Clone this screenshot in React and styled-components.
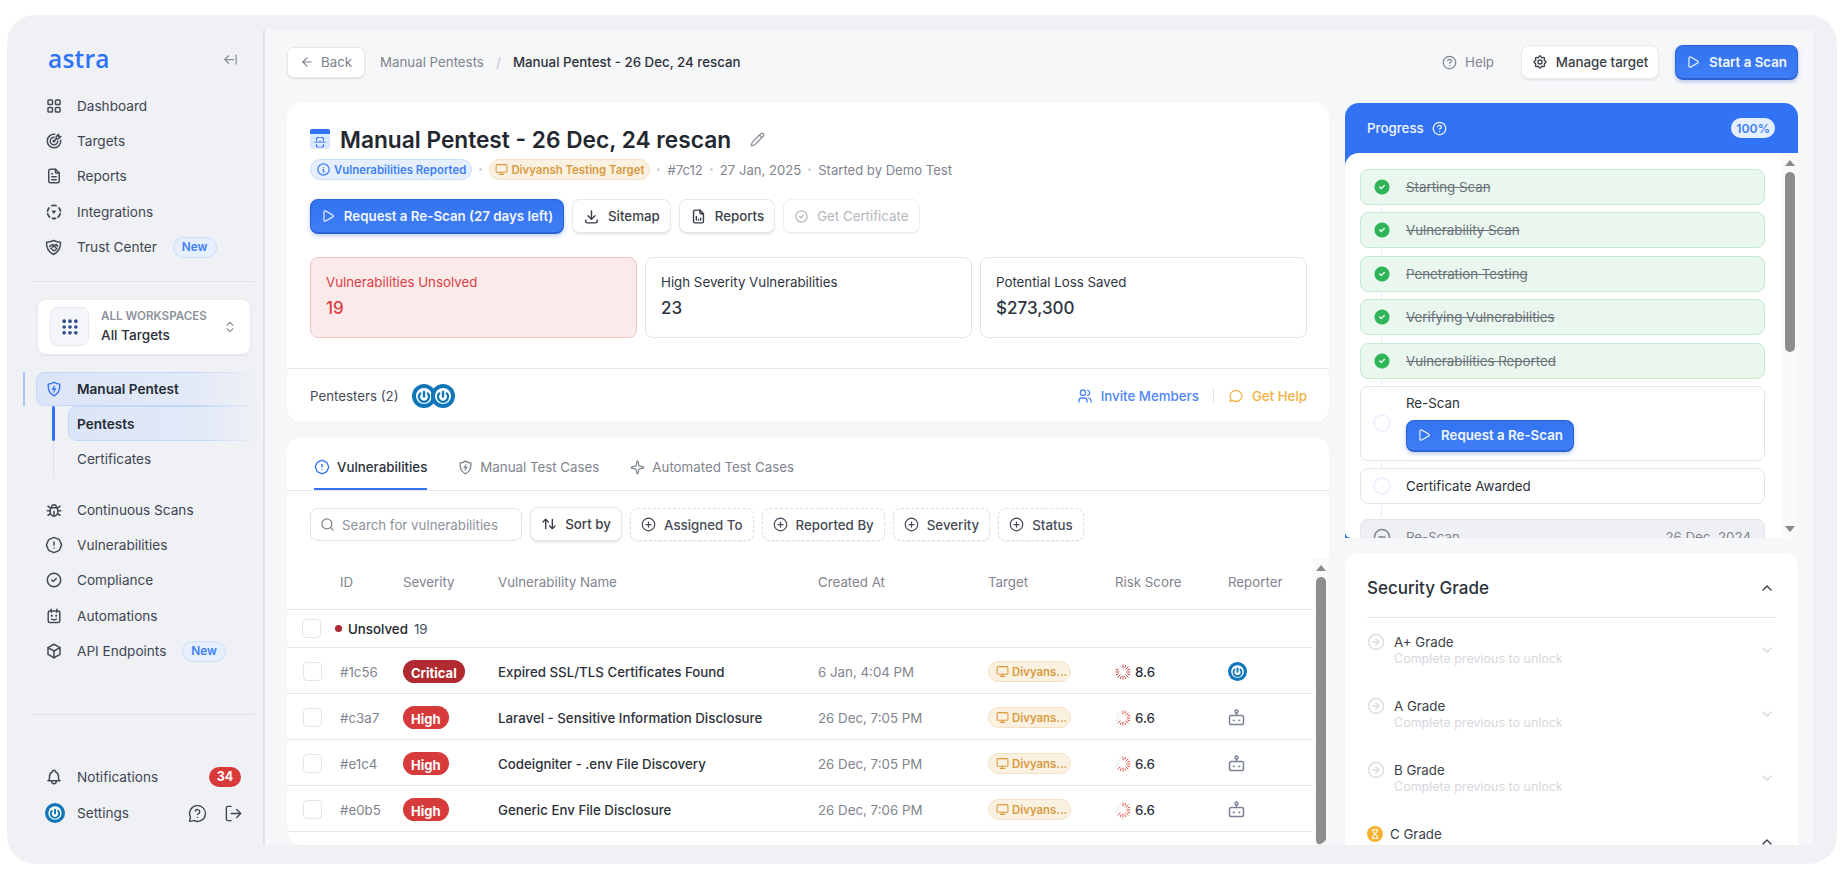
import React from 'react';
import styled, { createGlobalStyle } from 'styled-components';
import {
  ArrowLeft, ArrowLeftFromLine, ChevronDown, ChevronUp, ChevronsUpDown, CircleArrowRight, CircleHelp,
  CircleMinus, CirclePlus, Grip, Hourglass, LogOut, MessageCircleQuestion, Monitor, Pencil, Play, Search, Sparkle,
} from 'lucide-react';
import {
  TbAlertOctagon, TbArrowsSort, TbBell, TbBox, TbBug, TbCircleCheck, TbCircleCheckFilled, TbDownload,
  TbFileAnalytics, TbFileText, TbInfoCircle, TbLayoutGrid, TbMessageCircle,
  TbSettings, TbTargetArrow, TbUsers,
} from 'react-icons/tb';

const GlobalStyle = createGlobalStyle`
  html, body {
    margin: 0;
    height: 100%;
    background: #fff;
    overflow: hidden;
  }
  body {
    font-family: Inter, "Liberation Sans", sans-serif;
    color: #23272f;
  }
  * { box-sizing: border-box; }
  svg { flex: none; }
`;

// small drawings with no matching package icon
const IntegrationsIcon = () => (
  <svg width="16" height="16" viewBox="0 0 16 16" fill="none" stroke="currentColor" strokeWidth="1.8" strokeLinecap="round">
    <path d="M6 1.7a6.5 6.5 0 0 1 4 0M13 4a6.5 6.5 0 0 1 1.4 3M14.2 9.6a6.5 6.5 0 0 1-2 3.4M9.6 14.3a6.5 6.5 0 0 1-3.2 0M3.6 13a6.5 6.5 0 0 1-2-3.4M1.6 7A6.5 6.5 0 0 1 3 4" />
    <path d="M6.4 7h3.2L8 9.2z" fill="currentColor" strokeWidth="1" />
  </svg>
);

const TrustIcon = () => (
  <svg width="17" height="17" viewBox="0 0 17 17" fill="none" stroke="currentColor" strokeWidth="1.5" strokeLinejoin="round" strokeLinecap="round">
    <path d="M1.5 3.2c2.4 0 4.6-.5 7-1.7 2.4 1.2 4.6 1.7 7 1.7 .3 5.6-2.2 9.8-7 12.3-4.8-2.5-7.3-6.7-7-12.3z" />
    <path d="M4.6 7.4l2.6-1.9 2 1 2.2-1 1.2 1.9M7.2 8.2l1.7-1.3 3 2.8-2.7 2.3-3.4-2.7" />
  </svg>
);

const CalendarBot = () => (
  <svg width="16" height="16" viewBox="0 0 16 16" fill="none" stroke="currentColor" strokeWidth="1.5" strokeLinecap="round">
    <rect x="2.2" y="3" width="11.6" height="11.5" rx="1.6" />
    <path d="M5.2 1.2v3M10.8 1.2v3M5.5 11c1.5 1 3.5 1 5 0" />
    <path d="M5.8 7.5v.4M10.2 7.5v.4" strokeWidth="1.9" />
  </svg>
);

const ShieldBolt = ({ size = 16 }) => (
  <svg width={size} height={size} viewBox="0 0 16 16" fill="none" stroke="currentColor" strokeWidth="1.4" strokeLinejoin="round">
    <path d="M8 1.2c1.8 1.3 3.7 1.9 5.8 1.9.4 5.3-1.5 9.500-5.8 11.700C3.700 12.600 1.800 8.400 2.200 3.100 4.300 3.100 6.200 2.500 8 1.200z" />
    <path d="M8.600 4.600L6 8.500h2.200l-.7 3 2.500-3.900H7.900z" fill="currentColor" strokeWidth="0.6" />
  </svg>
);

const RobotIcon = () => (
  <svg width="17" height="17" viewBox="0 0 17 17" fill="none" stroke="#7b8494" strokeWidth="1.5" strokeLinecap="round">
    <circle cx="8.5" cy="2.6" r="1.5" />
    <path d="M8.5 4.2v2.3" />
    <rect x="1.5" y="6.5" width="14" height="9" rx="1.8" />
    <path d="M5.500 11.300h.5M11 11.300h.5" strokeWidth="1.7" />
  </svg>
);

const TitleIcon = () => (
  <svg width="20" height="20" viewBox="0 0 20 20" fill="none">
    <path d="M0 5h20v13a2 2 0 0 1-2 2H2a2 2 0 0 1-2-2z" fill="#dbe7fd" />
    <path d="M2 0h16a2 2 0 0 1 2 2v3H0V2a2 2 0 0 1 2-2z" fill="#3273f6" />
    <path d="M9 8.500H8a1.500 1.500 0 0 0-1.500 1.500v1M11 8.500h1a1.500 1.500 0 0 1 1.500 1.500v1M9 18h-1a1.500 1.500 0 0 1-1.500-1.500V15.500M11 18h1a1.500 1.500 0 0 0 1.500-1.500V15.500M5 13h10" stroke="#3273f6" strokeWidth="1.2" strokeLinecap="round" />
  </svg>
);

const Avatar = ({ size = 20 }) => (
  <svg width={size} height={size} viewBox="0 0 24 24">
    <circle cx="12" cy="12" r="12" fill="#0f76b8" />
    <circle cx="12" cy="12" r="8" fill="#fff" />
    <path d="M8.2 9.500a5 5 0 1 0 7.600 0" fill="none" stroke="#0f76b8" strokeWidth="2.4" strokeLinecap="round" />
    <path d="M12 8v4.500" stroke="#0f76b8" strokeWidth="2.4" strokeLinecap="round" />
  </svg>
);

const RiskSpinner = ({ score, color }) => {
  const lit = Math.round((score / 10) * 16);
  return (
    <svg width="16" height="16" viewBox="0 0 16 16">
      {Array.from({ length: 16 }, (_, i) => (
        <line
          key={i}
          x1="8"
          y1="0.8"
          x2="8"
          y2={i % 2 ? 3 : 4}
          stroke={i < lit ? color : '#e3e5e9'}
          strokeWidth="0.9"
          strokeLinecap="round"
          transform={`rotate(${(i * 360) / 16} 8 8)`}
        />
      ))}
    </svg>
  );
};

const Frame = styled.div`
  position: relative;
  display: flex;
  width: 1830px;
  height: 849px;
  margin: 15px 0 0 7px;
  background: #eff1f5;
  border-radius: 28px;
  overflow: hidden;
`;

const Sidebar = styled.aside`
  position: relative;
  flex: none;
  width: 258px;
  border-right: 2px solid #dfe1e7;
  margin: 15px 0 19px;
  display: flex;
  flex-direction: column;
`;

const LogoRow = styled.div`
  height: 58px;
  flex: none;
  display: flex;
  align-items: center;
  justify-content: space-between;
  padding: 0 25px 0 41px;
  color: #8a8f99;
`;

const Logo = styled.span`
  font-family: "Open Sans", sans-serif;
  font-size: 24.5px;
  font-weight: 600;
  color: #2f73f5;
  line-height: 1;
  letter-spacing: 0.2px;
`;

const NavList = styled.nav`
  display: flex;
  flex-direction: column;
`;

const NavItem = styled.div`
  height: 35.4px;
  flex: none;
  display: flex;
  align-items: center;
  padding-left: 38px;
  font-size: 13.6px;
  color: #3f4552;
  svg { color: #454b57; }
`;

const NavIcon = styled.span`
  width: 17px;
  margin-right: 15px;
  display: flex;
  justify-content: center;
`;

const NewBadge = styled.span`
  margin-left: 16px;
  height: 21px;
  padding: 0 8px;
  display: flex;
  align-items: center;
  border-radius: 11px;
  background: #e6effd;
  border: 1px solid #c9dcfb;
  color: #3f80f5;
  font-size: 11.8px;
  font-weight: 600;
`;

const SideDivider = styled.div`
  height: 1px;
  flex: none;
  margin: ${(p) => p.$top}px 8px 0 24px;
  background: #dfe1e7;
`;

const Workspace = styled.div`
  margin: 18px 13px 0 31px;
  height: 54px;
  flex: none;
  display: flex;
  align-items: center;
  padding: 0 13px 0 12px;
  background: #fff;
  border-radius: 8px;
  box-shadow: 0 1px 3px rgba(30, 40, 60, 0.1);
`;

const WorkspaceIcon = styled.div`
  width: 39px;
  height: 39px;
  display: flex;
  align-items: center;
  justify-content: center;
  background: #f5f6f9;
  border: 1px solid #e6e8ed;
  border-radius: 8px;
  color: #2c4a8a;
  margin-right: 12px;
`;

const WorkspaceText = styled.div`
  flex: 1;
  display: flex;
  flex-direction: column;
  gap: 4px;
`;

const WorkspaceLabel = styled.span`
  font-size: 11.6px;
  line-height: 14px;
  font-weight: 600;
  color: #8d929c;
`;

const WorkspaceName = styled.span`
  font-size: 13.6px;
  line-height: 17px;
  font-weight: 500;
  color: #2c313a;
`;

const fadedFill = `
  &::after {
    content: '';
    position: absolute;
    inset: 0;
    z-index: -1;
    border: 1px solid #c6d8f9;
    border-radius: 8px 0 0 8px;
    background: linear-gradient(90deg, #dbe5f8, #e6ebf7);
    -webkit-mask-image: linear-gradient(90deg, #000 72%, transparent);
    mask-image: linear-gradient(90deg, #000 72%, transparent);
  }
`;

const ActiveGroup = styled.div`
  position: relative;
  isolation: isolate;
  margin: 18px 3px 0 29px;
  height: 34px;
  flex: none;
  display: flex;
  align-items: center;
  padding-left: 9px;
  font-size: 13.6px;
  font-weight: 600;
  color: #262b35;
  svg { color: #3273f6; }
  ${fadedFill}
  &::before {
    content: '';
    position: absolute;
    left: -13px;
    top: 0;
    bottom: 0;
    width: 2px;
    background: #a9c6fb;
  }
`;

const SubList = styled.div`
  position: relative;
  margin: 0 3px 15px 46px;
  padding-left: 14px;
  border-left: 1px solid #dfe1e7;
  display: flex;
  flex-direction: column;
  &::before {
    content: '';
    position: absolute;
    left: -2px;
    top: 0;
    height: 35px;
    width: 3px;
    border-radius: 2px;
    background: #3273f6;
  }
`;

const SubItem = styled.div`
  position: relative;
  isolation: isolate;
  height: 35.5px;
  display: flex;
  align-items: center;
  padding-left: 9px;
  font-size: 13.6px;
  font-weight: ${(p) => (p.$active ? 600 : 400)};
  color: ${(p) => (p.$active ? '#262b35' : '#3f4552')};
  ${(p) => p.$active && fadedFill}
`;

const Footer = styled.div`
  margin-top: 44px;
  display: flex;
  flex-direction: column;
`;

const CountBadge = styled.span`
  margin-left: auto;
  margin-right: 22px;
  width: 32px;
  height: 20px;
  border-radius: 10px;
  background: #d83a3a;
  color: #fff;
  font-size: 12.5px;
  font-weight: 700;
  display: flex;
  align-items: center;
  justify-content: center;
`;

const SettingsRow = styled.div`
  height: 38px;
  display: flex;
  align-items: center;
  padding-left: 38px;
  font-size: 13.6px;
  color: #3f4552;
  svg { color: #3f4552; }
`;

const SettingsText = styled.span`
  margin-left: 12px;
  flex: 1;
`;

const SettingsTools = styled.span`
  display: flex;
  gap: 17px;
  margin-right: 20px;
`;

const Main = styled.main`
  flex: none;
  width: 1548px;
  margin: 15px 0 19px;
  padding: 15px 15px 0 22px;
  background: #f6f7f9;
  overflow: hidden;
  display: flex;
  flex-direction: column;
`;

const TopBar = styled.header`
  flex: none;
  height: 34px;
  margin-bottom: 24px;
  display: flex;
  align-items: center;
`;

const BackButton = styled.button`
  width: 78px;
  height: 31px;
  margin-right: 15px;
  display: flex;
  align-items: center;
  justify-content: center;
  gap: 7px;
  background: #fff;
  border: 1px solid #e7e8ec;
  border-radius: 7px;
  box-shadow: 0 1px 2px rgba(30, 40, 60, 0.1);
  font: 400 13.3px Inter, sans-serif;
  color: #7b808a;
`;

const Crumb = styled.span`
  font-size: 13.3px;
  color: ${(p) => (p.$current ? '#2c313a' : '#7f848e')};
  font-weight: ${(p) => (p.$current ? 500 : 400)};
`;

const CrumbSlash = styled.span`
  margin: 0 12px;
  font-size: 14px;
  color: #c5c8ce;
`;

const TopActions = styled.div`
  margin-left: auto;
  display: flex;
  align-items: center;
`;

const HelpLink = styled.span`
  display: flex;
  align-items: center;
  gap: 8px;
  margin-right: 27px;
  font-size: 13.3px;
  color: #7f848e;
`;

const Button = styled.button`
  flex: none;
  height: 35px;
  padding: 0 10px;
  display: flex;
  align-items: center;
  justify-content: center;
  gap: 8px;
  background: #fff;
  border: 1px solid #e7e8ec;
  border-bottom-width: 2px;
  border-radius: 8px;
  box-shadow: 0 1px 2px rgba(30, 40, 60, 0.06);
  font: 500 13.3px Inter, sans-serif;
  color: #3a3f4a;
  white-space: nowrap;
`;

const ManageButton = styled(Button)`
  width: 138px;
  margin-right: 16px;
`;

const PrimaryButton = styled(Button)`
  width: ${(p) => p.$width}px;
  gap: 9px;
  background: linear-gradient(180deg, #3273f0, #3f7ef5);
  border: 1px solid #2a62d6;
  border-bottom-width: 2px;
  box-shadow: 0 2px 4px rgba(40, 90, 200, 0.3);
  color: #f2f6ff;
  font-weight: 600;
`;

const DisabledButton = styled(Button)`
  color: #b4b7bd;
  border-color: #eff0f2;
  box-shadow: none;
  font-weight: 400;
`;

const SortButton = styled(Button)`
  width: 92px;
`;

const Columns = styled.div`
  flex: 1;
  min-height: 0;
  display: flex;
  gap: 16px;
`;

const LeftColumn = styled.div`
  flex: none;
  width: 1042px;
  display: flex;
  flex-direction: column;
  gap: 15px;
`;

const RightColumn = styled.div`
  flex: none;
  width: 453px;
  display: flex;
  flex-direction: column;
  gap: 15px;
`;

const Card = styled.section`
  flex: none;
  background: #fff;
  border-radius: 14px;
  box-shadow: 0 1px 2px rgba(30, 40, 60, 0.04);
`;

const SummaryBody = styled.div`
  padding: 21px 22px 30px 23px;
`;

const TitleRow = styled.div`
  height: 30px;
  display: flex;
  align-items: center;
`;

const Title = styled.h1`
  margin: 0 19px 0 10px;
  font-size: 22.7px;
  font-weight: 600;
  color: #23272f;
  white-space: nowrap;
`;

const MetaRow = styled.div`
  margin-top: 5px;
  height: 21px;
  display: flex;
  align-items: center;
  font-size: 13.1px;
  color: #7f848e;
`;

const Chip = styled.span`
  height: 21px;
  display: inline-flex;
  align-items: center;
  gap: 3px;
  padding: 0 5px;
  border-radius: 11px;
  font-size: 11.4px;
  font-weight: 600;
  white-space: nowrap;
  background: ${(p) => (p.$tone === 'blue' ? '#e6effd' : '#fbf1e1')};
  border: 1px solid ${(p) => (p.$tone === 'blue' ? '#c9dcfb' : '#f3e0c3')};
  color: ${(p) => (p.$tone === 'blue' ? '#3f80f5' : '#d9993f')};
`;

const Dot = styled.span`
  width: 3px;
  height: 3px;
  margin: 0 7px;
  border-radius: 50%;
  background: #cfd2d8;
`;

const ActionRow = styled.div`
  margin-top: 19px;
  display: flex;
  gap: 8px;
`;

const StatGrid = styled.div`
  margin-top: 23px;
  display: grid;
  grid-template-columns: repeat(3, 1fr);
  gap: 8px;
`;

const StatCard = styled.div`
  height: 81px;
  padding: 16px 15px;
  border-radius: 8px;
  border: 1px solid ${(p) => (p.$alert ? '#f5c6c8' : '#e4e5e9')};
  background: ${(p) => (p.$alert ? '#fbeaea' : '#fff')};
  color: ${(p) => (p.$alert ? '#dc3d45' : '#2f3440')};
`;

const StatLabel = styled.div`
  font-size: 13.3px;
  line-height: 17px;
`;

const StatValue = styled.div`
  margin-top: 6px;
  font-size: 17px;
  line-height: 22px;
  font-weight: 500;
`;

const SummaryFooter = styled.div`
  height: 54px;
  padding: 0 22px 0 23px;
  border-top: 1px solid #e7e8ec;
  display: flex;
  align-items: center;
  font-size: 13.3px;
  color: #474c58;
`;

const AvatarStack = styled.span`
  margin-left: 13px;
  display: flex;
  svg + svg { margin-left: -5px; }
`;

const FooterLink = styled.span`
  display: flex;
  align-items: center;
  gap: 8px;
  font-weight: 500;
  color: ${(p) => p.$color};
`;

const FooterLinks = styled.div`
  margin-left: auto;
  display: flex;
  align-items: center;
`;

const FooterSep = styled.span`
  width: 1px;
  height: 15px;
  margin: 0 14px;
  background: #e4e5e9;
`;

const TableCard = styled(Card)`
  flex: 1;
  min-height: 0;
  display: flex;
  flex-direction: column;
  overflow: hidden;
`;

const Tabs = styled.div`
  flex: none;
  height: 54px;
  padding-left: 27px;
  border-bottom: 1px solid #e7e8ec;
  display: flex;
  gap: 31px;
`;

const Tab = styled.div`
  height: 53px;
  padding-top: 9px;
  display: flex;
  align-items: center;
  gap: 7px;
  font-size: 13.3px;
  font-weight: ${(p) => (p.$active ? 500 : 400)};
  color: ${(p) => (p.$active ? '#2c313a' : '#7f848e')};
  border-bottom: 2px solid ${(p) => (p.$active ? '#3273f6' : 'transparent')};
  svg { color: ${(p) => (p.$active ? '#3273f6' : '#7f848e')}; }
`;

const Filters = styled.div`
  flex: none;
  margin-top: 16px;
  padding-left: 23px;
  display: flex;
  align-items: center;
  gap: 8px;
`;

const SearchBox = styled.div`
  width: 212px;
  height: 33px;
  padding: 0 9px;
  display: flex;
  align-items: center;
  gap: 7px;
  border: 1px solid #e2e4e9;
  border-radius: 8px;
  font-size: 13.3px;
  color: #8d929c;
  svg { color: #7f848e; }
`;

const DashedButton = styled.button`
  flex: none;
  height: 33px;
  padding: 0 10px;
  display: flex;
  align-items: center;
  gap: 8px;
  background: #fff;
  border: 1px dashed #dcdee3;
  border-radius: 8px;
  box-shadow: 0 1px 2px rgba(30, 40, 60, 0.05);
  font: 500 13.3px Inter, sans-serif;
  color: #474c58;
`;

const TableArea = styled.div`
  flex: 1;
  min-height: 0;
  margin-top: 16px;
  display: flex;
`;

const Table = styled.div`
  flex: 1;
`;

const Row = styled.div`
  display: grid;
  grid-template-columns: 53px 63px 95px 320px 170px 127px 113px 1fr;
  align-items: center;
  height: 46px;
  padding-top: 2px;
  border-bottom: 1px solid #e7e8ec;
`;

const HeadRow = styled(Row)`
  height: 52px;
  padding: 0 0 3px;
`;

const HeadCell = styled.span`
  font-size: 13.3px;
  color: #7f848e;
`;

const CheckBox = styled.span`
  justify-self: end;
  margin-right: 18px;
  width: 19px;
  height: 19px;
  border: 1px solid #e4e5e9;
  border-radius: 4px;
  background: #fff;
`;

const GroupRow = styled.div`
  display: flex;
  align-items: center;
  height: 38px;
  border-bottom: 1px solid #e7e8ec;
  font-size: 13.3px;
  color: #474c58;
`;

const GroupCheck = styled(CheckBox)`
  margin: 0 0 0 15px;
`;

const GroupDot = styled.span`
  width: 7px;
  height: 7px;
  margin: 0 6px 0 14px;
  border-radius: 50%;
  background: #b0282f;
`;

const GroupName = styled.span`
  font-weight: 500;
  color: #23272f;
  margin-right: 6px;
`;

const CellId = styled.span`
  font-size: 13.3px;
  color: #7f848e;
`;

const Severity = styled.span`
  justify-self: start;
  height: 23px;
  padding: 2px 8px 0;
  display: flex;
  align-items: center;
  border-radius: 12px;
  background: ${(p) => (p.$level === 'Critical' ? '#b02a2f' : '#d63a3a')};
  color: #fff;
  font-size: 13px;
  font-weight: 700;
`;

const CellName = styled.span`
  font-size: 13.3px;
  font-weight: 500;
  color: #2c313a;
`;

const CellDate = styled.span`
  font-size: 13.3px;
  color: #7f848e;
`;

const TargetChip = styled(Chip)`
  justify-self: start;
  width: 83px;
  padding: 0 7px;
`;

const Risk = styled.span`
  display: flex;
  align-items: center;
  gap: 4px;
  font-size: 13.3px;
  font-weight: 500;
  color: #2c313a;
`;

const ScrollTrack = styled.div`
  flex: none;
  width: ${(p) => p.$width}px;
  display: flex;
  flex-direction: column;
  align-items: center;
  background: #fafafa;
`;

const ScrollArrow = styled.span`
  flex: none;
  width: 0;
  height: 0;
  margin: ${(p) => (p.$down ? '0 0 6px' : '7px 0 6px')};
  border-left: 5.5px solid transparent;
  border-right: 5.5px solid transparent;
  ${(p) => (p.$down ? 'border-top: 6px solid #8a8a8a;' : 'border-bottom: 6px solid #8a8a8a;')}
`;

const ScrollThumb = styled.span`
  width: 10px;
  border-radius: 5px;
  background: #8d8d8d;
  flex: ${(p) => (p.$height ? 'none' : 1)};
  height: ${(p) => (p.$height ? `${p.$height}px` : 'auto')};
`;

const ScrollGap = styled.span`
  flex: 1;
`;

const ProgressPanel = styled.section`
  flex: none;
  height: 435px;
  display: flex;
  flex-direction: column;
  background: #3273f6;
  border-radius: 14px 14px 0 0;
  overflow: hidden;
`;

const ProgressHead = styled.div`
  flex: none;
  height: 50px;
  padding: 0 23px 0 22px;
  display: flex;
  align-items: center;
  gap: 8px;
  color: #f2f6ff;
  font-size: 13.3px;
  font-weight: 500;
`;

const PercentPill = styled.span`
  margin-left: auto;
  height: 20px;
  padding: 0 5px;
  display: flex;
  align-items: center;
  border-radius: 10px;
  background: #e6effd;
  color: #3f80f5;
  font-size: 12.3px;
  font-weight: 600;
`;

const ProgressBody = styled.div`
  flex: 1;
  min-height: 0;
  display: flex;
  background: #fff;
  border-radius: 14px 0 0 6px;
  overflow: hidden;
`;

const Steps = styled.div`
  flex: 1;
  padding: 16px 16px 0 15px;
  display: flex;
  flex-direction: column;
  gap: 7.4px;
`;

const Step = styled.div`
  position: relative;
  flex: none;
  min-height: 36px;
  margin-top: ${(p) => (p.$tone === 'grey' ? '7px' : 0)};
  padding: 0 13px 0 12px;
  display: flex;
  align-items: center;
  gap: 15px;
  border-radius: 8px;
  font-size: 13.3px;
  border: 1px solid ${(p) => ({ done: '#c5eacf', grey: '#e1e3e8' }[p.$tone] || '#e4e5e9')};
  background: ${(p) => ({ done: '#e9f7ee', grey: '#eef0f4' }[p.$tone] || '#fff')};
  color: ${(p) => ({ done: '#6b7079', grey: '#7f848e' }[p.$tone] || '#2c313a')};
  text-decoration: ${(p) => (p.$tone === 'done' ? 'line-through' : 'none')};
  &::after {
    content: '';
    position: absolute;
    left: 20px;
    top: 100%;
    width: 1px;
    height: ${(p) => (p.$last ? '14px' : '8px')};
    background: #e3ecfc;
  }
`;

const StepCircle = styled.span`
  flex: none;
  width: 18px;
  height: 18px;
  border-radius: 50%;
  border: 2px solid #edf2fd;
`;

const StepColumn = styled.div`
  padding: 8px 0;
  display: flex;
  flex-direction: column;
  align-items: flex-start;
  gap: 9px;
`;

const StepDate = styled.span`
  margin-left: auto;
`;

const SmallPrimary = styled(PrimaryButton)`
  height: 32px;
  width: 168px;
  gap: 10px;
`;

const GradeCard = styled(Card)`
  flex: 1;
  min-height: 0;
  padding: 0 23px 0 22px;
  overflow: hidden;
  border-radius: 14px 14px 0 0;
`;

const GradeHead = styled.div`
  height: 65px;
  padding-top: 6px;
  display: flex;
  align-items: center;
  justify-content: space-between;
  border-bottom: 1px solid #e4e5e9;
  font-size: 17px;
  font-weight: 500;
  color: #2c313a;
`;

const GradeRow = styled.div`
  height: 64px;
  padding-top: 15px;
  display: flex;
  gap: ${(p) => (p.$active ? 7 : 9)}px;
`;

const GradeText = styled.div`
  flex: 1;
`;

const GradeName = styled.div`
  font-size: 13.3px;
  line-height: 18px;
  color: #3a3f4a;
`;

const GradeHint = styled.div`
  font-size: 12.5px;
  line-height: 16px;
  color: #d6d8dc;
`;

const HourglassBadge = styled.span`
  flex: none;
  width: 16px;
  height: 16px;
  margin-top: 1px;
  border-radius: 50%;
  background: #f4b02e;
  display: flex;
  align-items: center;
  justify-content: center;
  color: #fff;
`;

const GradeChevron = styled.span`
  flex: none;
  display: flex;
  margin-top: 9px;
  color: ${(p) => (p.$active ? '#3a3f4a' : '#d6d8dc')};
`;

const navTop = [
  { label: 'Dashboard', icon: <TbLayoutGrid size={18} /> },
  { label: 'Targets', icon: <TbTargetArrow size={18} /> },
  { label: 'Reports', icon: <TbFileText size={18} /> },
  { label: 'Integrations', icon: <IntegrationsIcon /> },
  { label: 'Trust Center', icon: <TrustIcon />, isNew: true },
];

const navBottom = [
  { label: 'Continuous Scans', icon: <TbBug size={18} /> },
  { label: 'Vulnerabilities', icon: <TbAlertOctagon size={18} /> },
  { label: 'Compliance', icon: <TbCircleCheck size={18} /> },
  { label: 'Automations', icon: <CalendarBot /> },
  { label: 'API Endpoints', icon: <TbBox size={18} />, isNew: true },
];

const vulnerabilities = [
  { id: '#1c56', severity: 'Critical', name: 'Expired SSL/TLS Certificates Found', created: '6 Jan, 4:04 PM', score: 8.6, color: '#c0353a', human: true },
  { id: '#c3a7', severity: 'High', name: 'Laravel - Sensitive Information Disclosure', created: '26 Dec, 7:05 PM', score: 6.6, color: '#e2483f' },
  { id: '#e1c4', severity: 'High', name: 'Codeigniter - .env File Discovery', created: '26 Dec, 7:05 PM', score: 6.6, color: '#e2483f' },
  { id: '#e0b5', severity: 'High', name: 'Generic Env File Disclosure', created: '26 Dec, 7:06 PM', score: 6.6, color: '#e2483f' },
];

const doneSteps = ['Starting Scan', 'Vulnerability Scan', 'Penetration Testing', 'Verifying Vulnerabilities', 'Vulnerabilities Reported'];
const filters = ['Assigned To', 'Reported By', 'Severity', 'Status'];
const grades = ['A+ Grade', 'A Grade', 'B Grade'];

const SideNav = ({ items }) => (
  <NavList>
    {items.map((item) => (
      <NavItem key={item.label}>
        <NavIcon>{item.icon}</NavIcon>
        {item.label}
        {item.isNew && <NewBadge>New</NewBadge>}
      </NavItem>
    ))}
  </NavList>
);

export default function App() {
  return (
    <>
      <GlobalStyle />
      <Frame>
        <Sidebar>
          <LogoRow>
            <Logo>astra</Logo>
            <ArrowLeftFromLine size={15} />
          </LogoRow>
          <SideNav items={navTop} />
          <SideDivider $top={16} />
          <Workspace>
            <WorkspaceIcon><Grip size={20} strokeWidth={2.4} /></WorkspaceIcon>
            <WorkspaceText>
              <WorkspaceLabel>ALL WORKSPACES</WorkspaceLabel>
              <WorkspaceName>All Targets</WorkspaceName>
            </WorkspaceText>
            <ChevronsUpDown size={14} color="#8d929c" />
          </Workspace>
          <ActiveGroup>
            <NavIcon><ShieldBolt /></NavIcon>
            Manual Pentest
          </ActiveGroup>
          <SubList>
            <SubItem $active>Pentests</SubItem>
            <SubItem>Certificates</SubItem>
          </SubList>
          <SideNav items={navBottom} />
          <SideDivider $top={45} />
          <Footer>
            <NavItem>
              <NavIcon><TbBell size={18} /></NavIcon>
              Notifications
              <CountBadge>34</CountBadge>
            </NavItem>
            <SettingsRow>
              <Avatar />
              <SettingsText>Settings</SettingsText>
              <SettingsTools>
                <MessageCircleQuestion size={19} strokeWidth={1.7} />
                <LogOut size={19} strokeWidth={1.7} />
              </SettingsTools>
            </SettingsRow>
          </Footer>
        </Sidebar>

        <Main>
          <TopBar>
            <BackButton><ArrowLeft size={14} />Back</BackButton>
            <Crumb>Manual Pentests</Crumb>
            <CrumbSlash>/</CrumbSlash>
            <Crumb $current>Manual Pentest - 26 Dec, 24 rescan</Crumb>
            <TopActions>
              <HelpLink><CircleHelp size={15} />Help</HelpLink>
              <ManageButton><TbSettings size={16} />Manage target</ManageButton>
              <PrimaryButton $width={123}><Play size={14} />Start a Scan</PrimaryButton>
            </TopActions>
          </TopBar>

          <Columns>
            <LeftColumn>
              <Card>
                <SummaryBody>
                  <TitleRow>
                    <TitleIcon />
                    <Title>Manual Pentest - 26 Dec, 24 rescan</Title>
                    <Pencil size={15} color="#8a8f99" />
                  </TitleRow>
                  <MetaRow>
                    <Chip $tone="blue"><TbInfoCircle size={15} />Vulnerabilities Reported</Chip>
                    <Dot />
                    <Chip><Monitor size={13} />Divyansh Testing Target</Chip>
                    <Dot />#7c12<Dot />27 Jan, 2025<Dot />Started by Demo Test
                  </MetaRow>
                  <ActionRow>
                    <PrimaryButton $width={254}><Play size={14} />Request a Re-Scan (27 days left)</PrimaryButton>
                    <Button><TbDownload size={17} />Sitemap</Button>
                    <Button><TbFileAnalytics size={17} />Reports</Button>
                    <DisabledButton><TbCircleCheck size={15} />Get Certificate</DisabledButton>
                  </ActionRow>
                  <StatGrid>
                    <StatCard $alert>
                      <StatLabel>Vulnerabilities Unsolved</StatLabel>
                      <StatValue>19</StatValue>
                    </StatCard>
                    <StatCard>
                      <StatLabel>High Severity Vulnerabilities</StatLabel>
                      <StatValue>23</StatValue>
                    </StatCard>
                    <StatCard>
                      <StatLabel>Potential Loss Saved</StatLabel>
                      <StatValue>$273,300</StatValue>
                    </StatCard>
                  </StatGrid>
                </SummaryBody>
                <SummaryFooter>
                  Pentesters (2)
                  <AvatarStack><Avatar size={24} /><Avatar size={24} /></AvatarStack>
                  <FooterLinks>
                    <FooterLink $color="#4f86f7"><TbUsers size={16} />Invite Members</FooterLink>
                    <FooterSep />
                    <FooterLink $color="#f5b041"><TbMessageCircle size={16} />Get Help</FooterLink>
                  </FooterLinks>
                </SummaryFooter>
              </Card>

              <TableCard>
                <Tabs>
                  <Tab $active><TbAlertOctagon size={16} />Vulnerabilities</Tab>
                  <Tab><ShieldBolt size={15} />Manual Test Cases</Tab>
                  <Tab><Sparkle size={15} />Automated Test Cases</Tab>
                </Tabs>
                <Filters>
                  <SearchBox><Search size={15} />Search for vulnerabilities</SearchBox>
                  <SortButton><TbArrowsSort size={16} />Sort by</SortButton>
                  {filters.map((f) => (
                    <DashedButton key={f}><CirclePlus size={15} />{f}</DashedButton>
                  ))}
                </Filters>
                <TableArea>
                  <Table>
                    <HeadRow>
                      <span />
                      <HeadCell>ID</HeadCell>
                      <HeadCell>Severity</HeadCell>
                      <HeadCell>Vulnerability Name</HeadCell>
                      <HeadCell>Created At</HeadCell>
                      <HeadCell>Target</HeadCell>
                      <HeadCell>Risk Score</HeadCell>
                      <HeadCell>Reporter</HeadCell>
                    </HeadRow>
                    <GroupRow>
                      <GroupCheck />
                      <GroupDot />
                      <GroupName>Unsolved</GroupName>19
                    </GroupRow>
                    {vulnerabilities.map((v) => (
                      <Row key={v.id}>
                        <CheckBox />
                        <CellId>{v.id}</CellId>
                        <Severity $level={v.severity}>{v.severity}</Severity>
                        <CellName>{v.name}</CellName>
                        <CellDate>{v.created}</CellDate>
                        <TargetChip><Monitor size={13} />Divyans...</TargetChip>
                        <Risk><RiskSpinner score={v.score} color={v.color} />{v.score}</Risk>
                        {v.human ? <Avatar size={19} /> : <RobotIcon />}
                      </Row>
                    ))}
                  </Table>
                  <ScrollTrack $width={16}>
                    <ScrollArrow />
                    <ScrollThumb />
                  </ScrollTrack>
                </TableArea>
              </TableCard>
            </LeftColumn>

            <RightColumn>
              <ProgressPanel>
                <ProgressHead>
                  Progress
                  <CircleHelp size={15} />
                  <PercentPill>100%</PercentPill>
                </ProgressHead>
                <ProgressBody>
                  <Steps>
                    {doneSteps.map((s) => (
                      <Step key={s} $tone="done">
                        <TbCircleCheckFilled size={18} color="#2fb457" />
                        {s}
                      </Step>
                    ))}
                    <Step>
                      <StepCircle />
                      <StepColumn>
                        Re-Scan
                        <SmallPrimary><Play size={14} />Request a Re-Scan</SmallPrimary>
                      </StepColumn>
                    </Step>
                    <Step $last>
                      <StepCircle />
                      Certificate Awarded
                    </Step>
                    <Step $tone="grey">
                      <CircleMinus size={18} color="#7f848e" />
                      Re-Scan
                      <StepDate>26 Dec, 2024</StepDate>
                    </Step>
                  </Steps>
                  <ScrollTrack $width={17}>
                    <ScrollArrow />
                    <ScrollThumb $height={180} />
                    <ScrollGap />
                    <ScrollArrow $down />
                  </ScrollTrack>
                </ProgressBody>
              </ProgressPanel>

              <GradeCard>
                <GradeHead>
                  Security Grade
                  <ChevronUp size={16} color="#3a3f4a" />
                </GradeHead>
                {grades.map((g) => (
                  <GradeRow key={g}>
                    <CircleArrowRight size={18} color="#dcdee2" />
                    <GradeText>
                      <GradeName>{g}</GradeName>
                      <GradeHint>Complete previous to unlock</GradeHint>
                    </GradeText>
                    <GradeChevron><ChevronDown size={16} /></GradeChevron>
                  </GradeRow>
                ))}
                <GradeRow $active>
                  <HourglassBadge><Hourglass size={10} strokeWidth={2.5} /></HourglassBadge>
                  <GradeText><GradeName>C Grade</GradeName></GradeText>
                  <GradeChevron $active><ChevronUp size={16} /></GradeChevron>
                </GradeRow>
              </GradeCard>
            </RightColumn>
          </Columns>
        </Main>
      </Frame>
    </>
  );
}
